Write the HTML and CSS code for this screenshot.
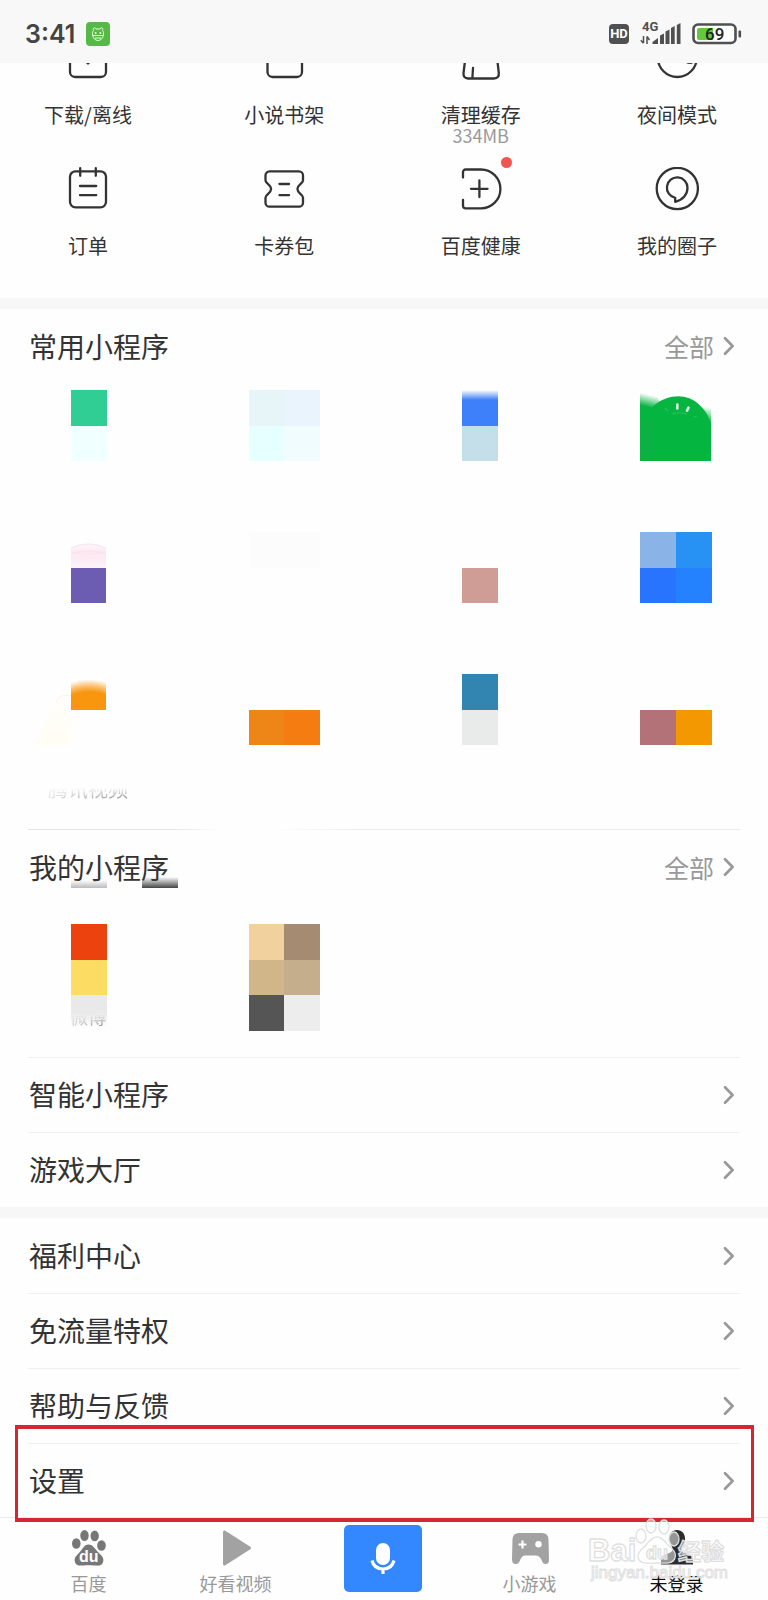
FILE: index.html
```html
<!DOCTYPE html>
<html lang="zh-CN">
<head>
<meta charset="utf-8">
<meta name="viewport" content="width=device-width, initial-scale=1">
<title>我的</title>
<link rel="stylesheet" href="styles.css">
</head>
<body>
<svg class="defs" aria-hidden="true">
  <symbol id="chevron" viewBox="0 0 12 20"><path d="M2 2.2 9.6 10 2 17.8" fill="none" stroke="#999" stroke-width="2.7" stroke-linecap="round" stroke-linejoin="round"/></symbol>
</svg>

<header class="status">
  <div class="status-side">
    <time class="clock">3:41</time>
    <svg class="app-badge" viewBox="0 0 24 24" aria-hidden="true">
      <rect width="24" height="24" rx="4" fill="#56b947"/>
      <g fill="none" stroke="#eaffdf" stroke-width="1"><path d="M7.500 8.500C6.500 5.500 9 5 10 7h4c1-2 3.500-1.500 2.500 1.500 1.200 1.500 1.300 3 .8 4.800-.7 3.500-2.800 5.200-5.300 5.200s-4.600-1.700-5.300-5.200c-.5-1.800-.4-3.300.8-4.800Z"/><path d="M6.500 13.500h11M9 16h6"/></g>
      <circle cx="9.600" cy="11" r="1" fill="#eaffdf"/><circle cx="14.400" cy="11" r="1" fill="#eaffdf"/>
    </svg>
  </div>
  <div class="status-side status-right">
    <span class="hd">HD</span>
    <svg class="signal" viewBox="0 0 41 23" aria-hidden="true">
      <text x="2" y="9" class="signal-text">4G</text>
      <path d="M3.500 14v7M.8 18.200l2.700 3M7 22v-7.500M9.500 18 7 14.500" fill="none" stroke="#505050" stroke-width="1.500"/>
      <path d="M12.500 22V20l5.500-4v6ZM20 13.500l4-2V22h-4ZM25.500 9.500l4-2V22h-4ZM31 6l3.700-2V22H31ZM36.800 3l3.700-2v21h-3.700Z" fill="#505050"/>
    </svg>
    <svg class="battery" viewBox="0 0 50 22" aria-hidden="true">
      <rect x="1.500" y="1.500" width="42" height="18.500" rx="4.500" fill="#fff" stroke="#505050" stroke-width="2.600"/>
      <path d="M7 5h14v12H7a2 2 0 0 1-2-2V7a2 2 0 0 1 2-2Z" fill="#62c93b"/>
      <rect x="46.500" y="7.500" width="2.600" height="7" rx="1" fill="#505050"/>
      <text x="13" y="17" class="battery-text">69</text>
    </svg>
  </div>
</header>

<main>
  <nav class="tools" aria-label="常用工具">
    <a class="tool" href="#"><svg class="tool-icon" viewBox="0 0 44 44"><rect x="4" y="6" width="36" height="35" rx="5"/><path d="M22 12v15M18.500 24l3.500 3.500 3.500-3.500"/></svg><span>下载/离线</span></a>
    <a class="tool" href="#"><svg class="tool-icon" viewBox="0 0 44 44"><rect x="5.500" y="4" width="34.500" height="37" rx="5"/></svg><span>小说书架</span></a>
    <a class="tool" href="#"><svg class="tool-icon" viewBox="0 0 44 44"><path d="M7 17 4.500 37q-.3 5.300 4.500 5.500h26q5.300-.2 4.800-5.500L37.500 17M14 32l-.6 10"/></svg><span>清理缓存</span><small>334MB</small></a>
    <a class="tool" href="#"><svg class="tool-icon" viewBox="0 0 44 44"><circle cx="22.300" cy="21.500" r="19.500"/><path d="M28 23q5 5.500 10 3"/></svg><span>夜间模式</span></a>
    <a class="tool" href="#"><svg class="tool-icon" viewBox="0 0 44 44"><rect x="4" y="4.300" width="36" height="36" rx="5.500"/><path d="M14.200 1.200v7.600M29.800 1.200v7.600M14 19h16.200M14 28.200h16.200"/></svg><span>订单</span></a>
    <a class="tool" href="#"><svg class="tool-icon" viewBox="0 0 44 44"><path d="M7.500 4.300H37a4 4 0 0 1 4 4v5.200c0 3-5.600 4-5.600 8.500S41 27.500 41 30.500v5.200a4 4 0 0 1-4 4H7.500a4 4 0 0 1-4-4v-5.200c0-3 5.600-4 5.600-8.500S3.500 16.500 3.500 13.500V8.300a4 4 0 0 1 4-4ZM17.500 17H27M17.500 28.200H27"/></svg><span>卡券包</span></a>
    <a class="tool" href="#"><span class="badge"><svg class="tool-icon" viewBox="0 0 44 44"><path d="M4 10.500V5a2.500 2.500 0 0 1 2.500-2.500H22a19.400 19.400 0 0 1 0 38.800H6.500A2.500 2.500 0 0 1 4 38.800v-6M12 21.800h16.600M20.400 13.500v16.600"/></svg></span><span>百度健康</span></a>
    <a class="tool" href="#"><svg class="tool-icon" viewBox="0 0 44 44"><circle cx="22.300" cy="21.500" r="20.600"/><path d="M20.200 30.800a10.300 10.300 0 1 1 12.300-10C32.600 27 28 33 20.200 34.800Z"/></svg><span>我的圈子</span></a>
  </nav>

  <section class="block">
    <div class="head">
      <h2>常用小程序</h2>
      <a class="more" href="#">全部<svg class="chevron"><use href="#chevron"/></svg></a>
    </div>
    <div class="minis minis-common">
      <svg class="mini" viewBox="0 0 120 71"><path fill="#30cd94" d="M43 0h35.500v35.500H43z"/><path fill="#f0ffff" d="M43 35.500h35.500V71H43z"/></svg>
      <svg class="mini" viewBox="0 0 120 71"><path fill="#e7f5f9" d="M24.700 0h35.500v35.500H24.700z"/><path fill="#e9f4fc" d="M60.200 0h35.500v35.500H60.200z"/><path fill="#e6ffff" d="M24.700 35.500h35.500V71H24.700z"/><path fill="#f1fcff" d="M60.200 35.500h35.500V71H60.200z"/></svg>
      <svg class="mini" viewBox="0 0 120 71">
        <linearGradient id="blue-fade" x1="0" y1="0" x2="0" y2="1"><stop offset="0" stop-color="#fff"/><stop offset=".28" stop-color="#3d80fa"/></linearGradient>
        <path fill="url(#blue-fade)" d="M41.300 0H77v35.500H41.300z"/><path fill="#c4dfea" d="M41.300 35.500H77V71H41.300z"/></svg>
      <svg class="mini mini-smooth" viewBox="0 0 120 71">
        <linearGradient id="green-fade" gradientUnits="userSpaceOnUse" x1="26" y1="3" x2="23" y2="15"><stop offset="0" stop-color="#04b640" stop-opacity="0"/><stop offset="1" stop-color="#08b441"/></linearGradient>
        <linearGradient id="green-edge" gradientUnits="userSpaceOnUse" x1="94" y1="18" x2="90" y2="32"><stop offset="0" stop-color="#04b640" stop-opacity="0"/><stop offset="1" stop-color="#04b640"/></linearGradient>
        <path fill="url(#green-fade)" d="M23 0h16l5 18v30H23z"/><path fill="url(#green-edge)" d="M84 14h10v30H84z"/>
        <path fill="#04b640" d="M23 30 37 15.500C52 3.500 70 3.500 82 14.500c5 4.500 8 9 10 14l2 7V71H23z"/><path fill="#11ae45" d="M23 30h14v41H23z" opacity=".5"/>
        <path d="M60.300 14.500v4M71.500 17.700l-1.500 3" stroke="#d8f5df" stroke-width="2.600" stroke-linecap="round"/><path d="M48 18l3 3M80 26l-3 1M55 24q7-2.500 15 0" fill="none" stroke="#2cc05c" stroke-width="1.200"/></svg>
      <svg class="mini mini-smooth" viewBox="0 0 120 71">
        <linearGradient id="pink-fade" x1="0" y1="0" x2="0" y2="1"><stop offset="0" stop-color="#fff8fb"/><stop offset=".4" stop-color="#fce7f1"/><stop offset="1" stop-color="#fdf3f8"/></linearGradient>
        <path fill="url(#pink-fade)" d="M43 16q18-9 35 0v20H43z"/><path d="M43 16q18-8 35 0M43 22q18-6 35 0" fill="none" stroke="#f9e2ec"/><path fill="#6c5db3" d="M43 36h35v35H43z"/></svg>
      <svg class="mini" viewBox="0 0 120 71"><path fill="#fcfcfc" d="M24.700 0h71v35.500h-71z"/></svg>
      <svg class="mini" viewBox="0 0 120 71"><path fill="#cf9c96" d="M41.300 35.500H77V71H41.300z"/></svg>
      <svg class="mini" viewBox="0 0 120 71"><path fill="#8ab4e8" d="M23 0h36v36H23z"/><path fill="#2891f4" d="M59 0h35.500v36H59z"/><path fill="#2874ff" d="M23 35.500h36V71H23z"/><path fill="#2481ff" d="M59 35.500h35.500V71H59z"/></svg>
      <div class="mini-named">
        <svg class="mini mini-smooth" viewBox="0 0 120 71">
          <radialGradient id="orange-fade" gradientUnits="userSpaceOnUse" cx="61" cy="62" r="58"><stop offset=".76" stop-color="#f8960f"/><stop offset=".86" stop-color="#fbbf6c"/><stop offset=".98" stop-color="#fff"/></radialGradient>
          <linearGradient id="cream" x1="0" y1="0" x2="0" y2="1"><stop offset="0" stop-color="#fefefe"/><stop offset="1" stop-color="#fffdf3"/></linearGradient>
          <path d="M28 24Q32 17 42 12L43 71H7Z" fill="url(#cream)"/><path d="M28 28Q32 19 43 22" fill="none" stroke="#fdf4ea"/>
          <path fill="url(#orange-fade)" d="M43 4h35v32H43z"/></svg>
        <span class="mini-name">腾讯视频</span>
      </div>
      <svg class="mini" viewBox="0 0 120 71"><path fill="#ed8616" d="M24.700 35.500h35.500V71H24.700z"/><path fill="#f47c11" d="M60.200 35.500h35.500V71H60.200z"/></svg>
      <svg class="mini" viewBox="0 0 120 71"><path fill="#3185b0" d="M41.300 0H77v35.500H41.300z"/><path fill="#e9ebea" d="M41.300 35.500H77V71H41.300z"/></svg>
      <svg class="mini" viewBox="0 0 120 71"><path fill="#b27277" d="M23 35.500h36V71H23z"/><path fill="#f49802" d="M59 35.500h35.500V71H59z"/></svg>
    </div>
  </section>

  <section class="block">
    <div class="rule rule-faded"></div>
    <div class="head head-smudged">
      <h2>我的小程序</h2>
      <a class="more" href="#">全部<svg class="chevron"><use href="#chevron"/></svg></a>
    </div>
    <div class="minis minis-mine">
      <div class="mini-tile">
        <svg class="mini-tall" viewBox="0 0 120 107">
          <linearGradient id="grey-fade" x1="0" y1="0" x2="0" y2="1"><stop offset=".5" stop-color="#e9e9e9"/><stop offset="1" stop-color="#fff"/></linearGradient>
          <path fill="#ec420e" d="M43 0h35.500v35.700H43z"/><path fill="#fddc63" d="M43 35.700h35.500v35.600H43z"/><path fill="url(#grey-fade)" d="M43 71.300h35.500V105H43z"/></svg>
        <span class="mini-name mini-name-over">微博</span>
      </div>
      <svg class="mini-tall" viewBox="0 0 120 107"><path fill="#f1d29f" d="M24.700 0h35.500v35.700H24.700z"/><path fill="#a58b72" d="M60.200 0h35.500v35.700H60.200z"/><path fill="#d0b688" d="M24.700 35.700h35.500v35.600H24.700z"/><path fill="#c4ae8c" d="M60.200 35.700h35.500v35.600H60.200z"/><path fill="#555" d="M24.700 71.300h35.500V107H24.700z"/><path fill="#ededed" d="M60.200 71.300h35.500V107H60.200z"/></svg>
    </div>
    <a class="row" href="#"><span>智能小程序</span><svg class="chevron"><use href="#chevron"/></svg></a>
    <a class="row" href="#"><span>游戏大厅</span><svg class="chevron"><use href="#chevron"/></svg></a>
  </section>

  <section class="block">
    <a class="row" href="#"><span>福利中心</span><svg class="chevron"><use href="#chevron"/></svg></a>
    <a class="row" href="#"><span>免流量特权</span><svg class="chevron"><use href="#chevron"/></svg></a>
    <a class="row" href="#"><span>帮助与反馈</span><svg class="chevron"><use href="#chevron"/></svg></a>
    <a class="row row-marked" href="#"><span>设置</span><svg class="chevron"><use href="#chevron"/></svg></a>
  </section>
</main>

<nav class="tabs" aria-label="主导航">
  <a class="tab" href="#">
    <svg class="tab-icon" viewBox="0 0 36 36"><g fill="#777"><ellipse cx="5.300" cy="13.500" rx="4.300" ry="5.300"/><ellipse cx="13.500" cy="5.600" rx="4.200" ry="5.500"/><ellipse cx="23.700" cy="5.900" rx="4.200" ry="5.300"/><ellipse cx="30.500" cy="15.500" rx="4.300" ry="5.300"/><path d="M17.500 14.500c4 0 6 3.500 8.500 6.500 3 3.500 7 5.500 6.300 10-.8 5-5 4.800-8.300 4.500-3-.3-9-.3-12 0-3.500.3-7.500.2-8.300-4.500-.6-4.500 3.300-6.500 6-10 2.500-3 3.800-6.500 7.800-6.500Z"/></g><text x="8" y="32" class="paw-text">du</text></svg>
    <span>百度</span></a>
  <a class="tab" href="#">
    <svg class="tab-icon" viewBox="0 0 36 36"><path d="M6.500 2v32l25-16Z" fill="#a2a2a2" stroke="#a2a2a2" stroke-width="3" stroke-linejoin="round"/></svg>
    <span>好看视频</span></a>
  <button class="mic" type="button" aria-label="语音">
    <svg class="mic-icon" viewBox="0 0 26 32"><rect x="6" y="0" width="14" height="22" rx="7" fill="#fff"/><path d="M2 17.500c1.500 6 6 8.500 11 8.500s9.500-2.500 11-8.500M13 26v5" fill="none" stroke="#fff" stroke-width="3.200"/></svg>
  </button>
  <a class="tab" href="#">
    <svg class="tab-icon" viewBox="0 0 36 36"><path d="M7 3h23q6 0 6.500 6L37 30q0 4-3.500 4c-2 0-3-1.500-4-4-1-2.500-3-4.500-6-4.500h-10c-3 0-4.500 2-5.500 5C7 33 5.500 34 4 34 1 34 0 32 0 29.500L.5 9Q1 3 7 3Z" fill="#a2a2a2"/><path d="M10.500 10.500v8M6.500 14.500h8" stroke="#fff" stroke-width="2.200"/><circle cx="26.500" cy="14.300" r="3.200" fill="#fff"/></svg>
    <span>小游戏</span></a>
  <a class="tab tab-active" href="#">
    <svg class="tab-icon" viewBox="0 0 36 36"><path d="M18 0c5 0 8 3.700 8 8.500 0 3.500-1.500 6-3 8.200-1 2-.5 4.800 1.500 5.800 4 1.500 9.500 3 9.500 7.500v4.500H2V30c0-4.500 5.500-6 9.500-7.500 2-1 2.500-3.800 1.500-5.800-1.500-2.200-3-4.700-3-8.200C10 3.700 13 0 18 0Z" fill="#2c2c2c"/></svg>
    <span>未登录</span></a>
  <svg class="watermark" viewBox="0 0 142 68" aria-hidden="true">
    <g fill="#fff" fill-opacity=".5" stroke="#e0e0e0" stroke-width="1.300">
      <ellipse cx="54" cy="18" rx="5" ry="7"/><ellipse cx="64" cy="8" rx="5" ry="7"/><ellipse cx="77" cy="9" rx="5" ry="7"/><ellipse cx="87" cy="21" rx="5" ry="7"/>
      <path d="M70 19c6 0 8 5 12 9s8 7 6 12c-2 6-8 5-18 5s-17 1-19-5c-1-5 3-8 7-12s6-9 12-9Z"/>
      <text x="1" y="43" class="wm-big">Bai</text><text x="59" y="41" class="wm-du">du</text><text x="91" y="42" class="wm-cjk">经验</text>
      <text x="4" y="60" class="wm-url" stroke-width="1">jingyan.baidu.com</text>
    </g>
  </svg>
</nav>
</body>
</html>
```
FILE: styles.css
```css
* { box-sizing: border-box; }

body {
  margin: 0;
  background: #fefefe;
  color: #333;
  font-family: "Noto Sans CJK SC", sans-serif;
}

a { color: inherit; text-decoration: none; }
svg { display: block; flex: none; }
.defs { width: 0; height: 0; position: absolute; }

/* Status bar */
.status {
  position: relative;
  z-index: 1;
  display: flex;
  align-items: center;
  justify-content: space-between;
  height: 63px;
  padding: 4px 26px 0 25px;
  background: #f8f8f8;
}
.status-side { display: flex; align-items: center; gap: 11px; }
.clock { font: 600 25px/30px Inter, sans-serif; color: #444; }
.app-badge { width: 24px; height: 24px; }
.hd {
  width: 20px;
  border-radius: 4px;
  background: #505050;
  color: #fff;
  font: 700 13px/20px Roboto, sans-serif;
  text-align: center;
}
.signal { width: 41px; height: 23px; overflow: visible; }
.signal-text { font: 700 13px Roboto, sans-serif; fill: #505050; }
.battery { width: 50px; height: 22px; }
.battery-text { font: 500 17px Roboto, sans-serif; fill: #222; }

/* Tool grid, scrolled partly under the status bar */
.tools {
  display: grid;
  grid-template-columns: repeat(4, 120px);
  grid-auto-rows: 131px;
  justify-content: space-between;
  margin-top: -27px;
  padding: 0 31px 0 28px;
}
.tool {
  display: flex;
  flex-direction: column;
  align-items: center;
  font-size: 20px;
  line-height: 24px;
}
.tool-icon {
  width: 44px;
  height: 44px;
  margin-bottom: 23px;
  fill: none;
  stroke: #333;
  stroke-width: 2.3;
  stroke-linecap: round;
  stroke-linejoin: round;
}
.tool small { font-size: 18px; line-height: 16px; color: #999; }
.badge { position: relative; }
.badge::after {
  content: "";
  position: absolute;
  top: -10px;
  right: -9px;
  width: 11px;
  height: 11px;
  border-radius: 50%;
  background: #f0554f;
}

/* Sections */
.block { padding: 0 28px; }
.tools + .block, .block:last-child { border-top: 11px solid #f7f7f7; }
.rule { height: 1px; }
.rule-faded {
  background: linear-gradient(to right, #e6e6e6 150px, transparent 190px, transparent 240px, #ebebeb 340px);
}
.head, .row {
  display: flex;
  align-items: center;
  justify-content: space-between;
  height: 75px;
  padding: 0 5px 0 1px;
  font-size: 28px;
  line-height: 40px;
}
.head h2 { margin: 0; padding-bottom: 2px; font-size: 28px; font-weight: 400; }
.more { display: flex; align-items: center; gap: 9px; padding-bottom: 2px; font-size: 25px; color: #999; }
.chevron { width: 12px; height: 20px; }
.row { border-top: 1px solid #f0f0f0; }
.row span { padding-bottom: 3px; }
.block:last-child .row:first-child { border-top-color: transparent; }

.head-smudged { position: relative; }
.head-smudged::before, .head-smudged::after {
  content: "";
  position: absolute;
  bottom: 17px;
  width: 36px;
}
.head-smudged::before { left: 43px; height: 8px; background: linear-gradient(transparent, #bbb); }
.head-smudged::after { left: 114px; height: 11px; background: linear-gradient(transparent, #444); }

.minis {
  display: grid;
  grid-template-columns: repeat(4, 120px);
  justify-content: space-between;
  padding-right: 3px;
}
.minis-common { grid-auto-rows: 142px; padding-top: 6px; padding-bottom: 13px; }
.minis-mine { padding-top: 19px; padding-bottom: 26px; }
.mini { width: 120px; height: 71px; shape-rendering: crispEdges; }
.mini-smooth { shape-rendering: auto; }
.mini-tall { width: 120px; height: 107px; shape-rendering: crispEdges; }
.mini-named { display: flex; flex-direction: column; align-items: center; gap: 32px; }
.mini-tile { position: relative; }
.mini-name {
  color: #777;
  font-size: 20px;
  line-height: 24px;
  -webkit-mask-image: linear-gradient(to right, rgba(0, 0, 0, .3), #000), linear-gradient(transparent 45%, #000);
  -webkit-mask-composite: source-in;
  mask-composite: intersect;
}
.mini-name-over {
  position: absolute;
  left: 42px;
  bottom: 3px;
  width: 37px;
  overflow: hidden;
  white-space: nowrap;
  font-size: 18px;
}

/* Red frame drawn round the settings row */
.row-marked { position: relative; z-index: 2; }
.row-marked::after {
  content: "";
  position: absolute;
  inset: -19px -14px -4px -13px;
  border: solid #d4272f;
  border-width: 4px 3px;
}

/* Tab bar */
.tabs {
  position: relative;
  display: grid;
  grid-template-columns: repeat(5, 1fr);
  justify-items: center;
  height: 83px;
  margin-top: -1px;
  padding: 0 18px 0 15px;
  border-top: 1px solid #ebebeb;
}
.tab {
  display: flex;
  flex-direction: column;
  align-items: center;
  gap: 5px;
  padding-top: 12px;
  color: #999;
  font-size: 18px;
  line-height: 24px;
}
.tab-active { color: #111; }
.tab-icon { width: 36px; height: 36px; overflow: visible; }
.paw-text { font: 700 16px "Liberation Sans", sans-serif; fill: #fff; }
.mic {
  display: flex;
  align-items: center;
  justify-content: center;
  width: 78px;
  height: 67px;
  margin-top: 7px;
  padding: 0;
  border: 0;
  border-radius: 5px;
  background: #3388ff;
}
.mic-icon { width: 26px; height: 32px; }
.watermark {
  position: absolute;
  z-index: 3;
  top: 0;
  right: 39px;
  width: 142px;
  height: 68px;
  overflow: visible;
  pointer-events: none;
}
.wm-big { font: 700 31px "Liberation Sans", sans-serif; }
.wm-du { font: 700 18px "Liberation Sans", sans-serif; }
.wm-cjk { font: 700 23px "Noto Sans CJK SC", sans-serif; }
.wm-url { font: 400 17px "Liberation Sans", sans-serif; }
```
